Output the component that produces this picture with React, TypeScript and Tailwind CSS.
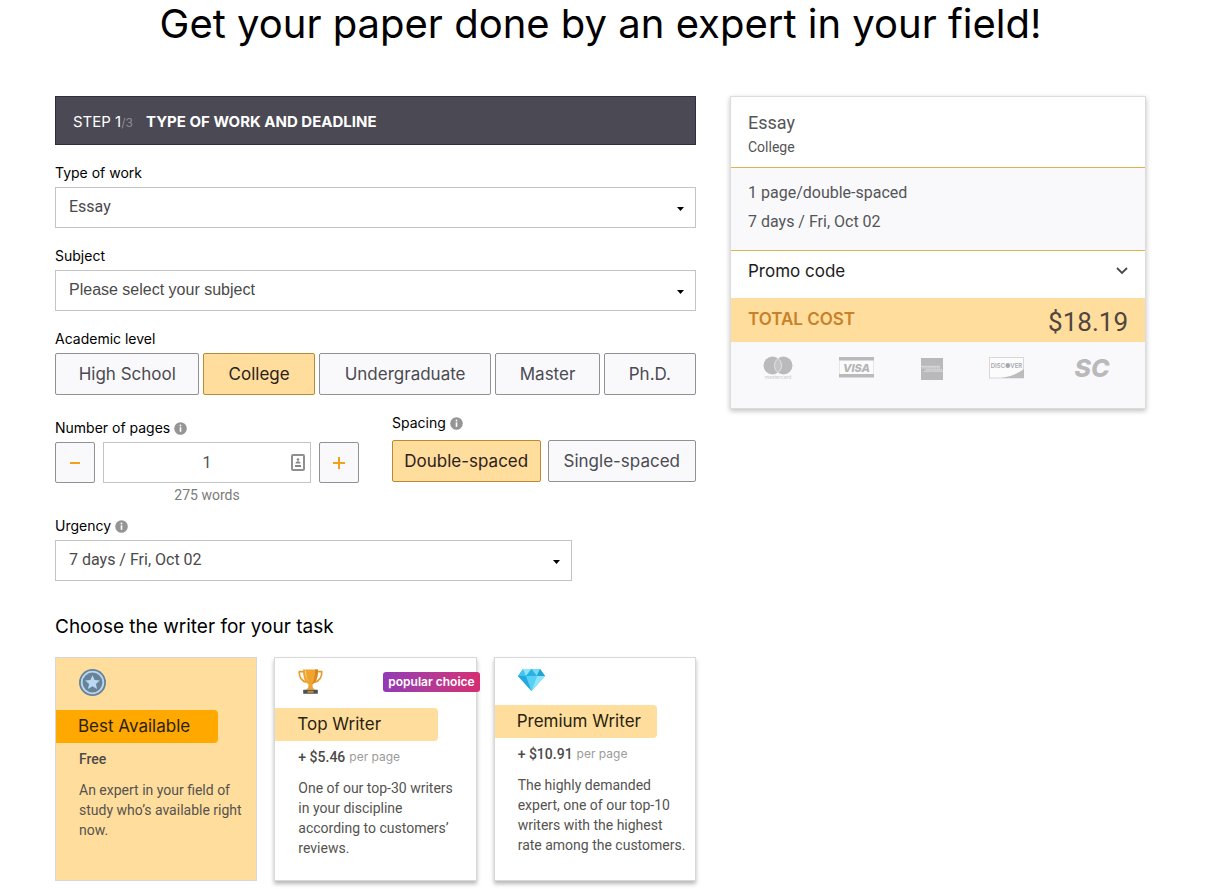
import { useState } from 'react';

const WORDS_PER_PAGE = 275;

const levels = ['High School', 'College', 'Undergraduate', 'Master', 'Ph.D.'];
const spacings = ['Double-spaced', 'Single-spaced'];

const writers = [
  {
    key: 'best',
    name: 'Best Available',
    price: 'Free',
    suffix: '',
    description: 'An expert in your field of study who’s available right now.',
    icon: <MedalIcon />,
    popular: false
  },
  {
    key: 'top',
    name: 'Top Writer',
    price: '+ $5.46',
    suffix: 'per page',
    description: 'One of our top-30 writers in your discipline according to customers’ reviews.',
    icon: <TrophyIcon />,
    popular: true
  },
  {
    key: 'premium',
    name: 'Premium Writer',
    price: '+ $10.91',
    suffix: 'per page',
    description: 'The highly demanded expert, one of our top-10 writers with the highest rate among the customers.',
    icon: <DiamondIcon />,
    popular: false
  }
];

function MedalIcon() {
  return (
    <svg width="27" height="27" viewBox="0 0 27 27" aria-hidden="true">
      <circle cx="13.5" cy="13.5" r="13.5" fill="#66839a" />
      <circle cx="13.5" cy="13.5" r="10.8" fill="none" stroke="#b9d5ee" strokeWidth="1.8" />
      <path d="M13.5 6.2l2.1 4.8 5.2.5-3.9 3.4 1.2 5.1-4.6-2.7-4.6 2.7 1.2-5.1-3.9-3.4 5.2-.5z" fill="#bcd9f3" />
    </svg>
  );
}

function TrophyIcon() {
  return (
    <svg width="25" height="25" viewBox="0 0 25 25" aria-hidden="true">
      <path d="M6 2.6H1.3C1 7.600 3.400 11.800 8.300 13.300M19 2.600h4.700C24 7.600 21.600 11.800 16.700 13.300" fill="none" stroke="#e89a2c" strokeWidth="1.6" />
      <path d="M5 .4h15c0 7.600-1.500 12.300-5.400 14.600v2.600c.2 1.600 1 2.200 2.600 3.200H7.800c1.600-1 2.400-1.600 2.600-3.200V15C6.500 12.700 5 8 5 .4z" fill="#f0a32f" />
      <path d="M8 1.500c.2 5.500 1.100 9.100 3.100 11.400C8.500 10.800 7 7.200 6.900 1.500z" fill="#ffcf74" />
      <path d="M17 .4h3c0 7.600-1.500 12.300-5.400 14.600l-1 .3C16 12.500 17.300 8 17 .4z" fill="#d8861d" />
      <rect x="5.200" y="20.800" width="14.600" height="4" rx=".5" fill="#4b5158" />
      <rect x="9.500" y="21.800" width="6" height="2" fill="#c98a34" />
    </svg>
  );
}

function DiamondIcon() {
  return (
    <svg width="27" height="22" viewBox="0 0 27 22" aria-hidden="true">
      <path d="M5 0h17l5 7-13.500 15L0 7z" fill="#35bdea" />
      <path d="M0 7h8l5.500 15z" fill="#23a9dd" />
      <path d="M8 7h11l-5.500 15z" fill="#56d0f5" />
      <path d="M19 7h8L13.500 22z" fill="#8fe3fb" />
      <path d="M5 0l3 7H0z" fill="#45c5ee" />
      <path d="M5 0h8.500L8 7z" fill="#8fe6fc" />
      <path d="M13.500 0L19 7H8z" fill="#29b3e4" />
      <path d="M13.500 0H22l-3 7z" fill="#74dbf8" />
      <path d="M22 0l5 7h-8z" fill="#1fa3d8" />
    </svg>
  );
}

function InfoIcon() {
  return (
    <svg width="13" height="13" viewBox="0 0 13 13" aria-hidden="true">
      <circle cx="6.500" cy="6.500" r="6.300" fill="#959595" />
      <path d="M6.500 5.300v4.500" fill="none" stroke="#fff" strokeWidth="1.600" />
      <circle cx="6.500" cy="3.500" r=".9" fill="#fff" />
    </svg>
  );
}

function Caret() {
  return (
    <svg className="pointer-events-none absolute top-5 right-3" width="7" height="4" viewBox="0 0 7 4" aria-hidden="true">
      <path d="M0 0h7L3.500 4z" fill="#000" />
    </svg>
  );
}

function PaymentIcons() {
  return (
    <div className="flex h-[66px] items-start justify-between pt-3 pr-[31px] pl-8 font-[Inter,sans-serif]">
      <svg width="30" height="27" viewBox="0 0 30 27" role="img" aria-label="Mastercard">
        <circle cx="9.500" cy="11.500" r="9" fill="#bababc" />
        <circle cx="20.500" cy="11.500" r="9" fill="#bababc" />
        <path d="M15 4.400a9 9 0 0 1 0 14.200 9 9 0 0 1 0-14.200z" fill="#c4c4c6" stroke="#ececee" strokeWidth=".8" />
        <text x="15" y="25" textAnchor="middle" fontSize="5" fill="#c9c9cb">mastercard</text>
      </svg>
      <svg width="35" height="27" viewBox="0 0 35 27" role="img" aria-label="Visa">
        <rect x=".5" y="3.500" width="34" height="19" fill="#fbfbfc" stroke="#e6e6e8" />
        <path d="M0 3h35v3.500H0zM0 20h35v3.500H0z" fill="#bababc" />
        <text x="17.500" y="17.500" textAnchor="middle" fontSize="11" fontWeight="800" fontStyle="italic" fill="#b4b4b6">VISA</text>
      </svg>
      <svg width="24" height="27" viewBox="0 0 24 27" role="img" aria-label="American Express">
        <rect x="1" y="4" width="22" height="22" fill="#b9b9bc" />
        <path d="M1 12.300h19M4 17.200h19" stroke="#e4e4e6" strokeWidth=".8" />
        <path d="M2 13.900h18M6 15.700h16" stroke="#dcdcde" strokeWidth="1.200" strokeDasharray="1.500 .6" />
      </svg>
      <svg width="35" height="27" viewBox="0 0 35 27" role="img" aria-label="Discover">
        <rect x=".5" y="3.500" width="34" height="20.500" fill="#fcfcfd" stroke="#d8d8da" />
        <path d="M12 24c10-1.500 17-4.500 23-9v9z" fill="#bcbcbe" />
        <text x="17.500" y="14" textAnchor="middle" fontSize="6" fontWeight="600" fill="#a9a9ab">DISC●VER</text>
      </svg>
      <svg width="44" height="30" viewBox="0 0 44 30" role="img" aria-label="SC">
        <text x="22" y="23" textAnchor="middle" fontSize="25" fontWeight="800" fontStyle="italic" fill="#b9b9bb">SC</text>
      </svg>
    </div>
  );
}

const labelClass = 'block text-sm leading-5 text-black';
const selectClass =
  'block h-[41px] w-full appearance-none rounded-none border border-[#c4c4c6] bg-white pb-[2px] pl-[13px] text-base text-[#4a4a4a]';

const optionClass = (active: boolean) =>
  `h-[42px] rounded-[2px] border pt-[2px] text-[17px] whitespace-nowrap ${
    active ? 'border-[#b98a35] bg-[#ffdd9c] text-[#2b211b]' : 'border-[#919195] bg-[#f9f9fc] text-[#4b4a52]'
  }`;

const stepperClass =
  'flex h-[41px] w-10 shrink-0 items-center justify-center rounded-[2px] border border-[#919195] bg-[#f9f9fc]';

export default function OrderForm() {
  const [workType, setWorkType] = useState<string>('Essay');
  const [subject, setSubject] = useState<string>('');
  const [level, setLevel] = useState<string>('College');
  const [pages, setPages] = useState<number>(1);
  const [spacing, setSpacing] = useState<string>('Double-spaced');
  const [urgency, setUrgency] = useState<string>('7 days / Fri, Oct 02');
  const [writer, setWriter] = useState<string>('best');

  return (
    <div className="bg-white pr-[65px] pl-[55px] font-[Inter,sans-serif]">
      <h1 className="text-center text-[40px] leading-[48px] text-black">
        Get your paper done by an expert in your field!
      </h1>

      <div className="mt-12 grid grid-cols-[minmax(0,641fr)_minmax(0,416fr)] items-start gap-[34px]">
        <main>
          <h2 className="flex h-[49px] items-center border border-[#2f2e3a] bg-[#4b4954] px-[17px] pt-1 text-[15px] text-white">
            <span className="font-normal">
              STEP 1<span className="text-xs text-[#8d8c94]">/3</span>
            </span>
            <span className="ml-[13px] font-bold">TYPE OF WORK AND DEADLINE</span>
          </h2>

          <div className="mt-[18px]">
            <label htmlFor="work-type" className={labelClass}>Type of work</label>
            <div className="relative mt-1">
              <select
                id="work-type"
                value={workType}
                onChange={(e) => setWorkType(e.target.value)}
                className={`${selectClass} font-[Roboto,sans-serif]`}
              >
                <option>Essay</option>
                <option>Research paper</option>
              </select>
              <Caret />
            </div>
          </div>

          <div className="mt-[18px]">
            <label htmlFor="subject" className={labelClass}>Subject</label>
            <div className="relative mt-1">
              <select
                id="subject"
                value={subject}
                onChange={(e) => setSubject(e.target.value)}
                className={`${selectClass} font-['Liberation_Sans',sans-serif]`}
              >
                <option value="">Please select your subject</option>
                <option>History</option>
              </select>
              <Caret />
            </div>
          </div>

          <div className="mt-[18px]" role="group" aria-labelledby="level-label">
            <span id="level-label" className={labelClass}>Academic level</span>
            <div className="mt-1 grid grid-cols-[144fr_111fr_172fr_104fr_92fr] gap-1">
              {levels.map((item) => (
                <button key={item} type="button" aria-pressed={level === item} onClick={() => setLevel(item)} className={optionClass(level === item)}>
                  {item}
                </button>
              ))}
            </div>
          </div>

          <div className="mt-[18px] grid grid-cols-2 items-start gap-[33px]">
            <div className="pt-[5px]">
              <label htmlFor="pages" className="flex items-center gap-1 text-sm leading-5 text-black">
                Number of pages <InfoIcon />
              </label>
              <div className="mt-1 flex gap-2">
                <button type="button" aria-label="Remove page" onClick={() => setPages(Math.max(1, pages - 1))} className={stepperClass}>
                  <svg width="12" height="12" viewBox="0 0 12 12" aria-hidden="true">
                    <path d="M1 6h10" stroke="#f0a21c" strokeWidth="2" />
                  </svg>
                </button>
                <div className="relative min-w-0 flex-1">
                  <input
                    id="pages"
                    type="text"
                    inputMode="numeric"
                    value={pages}
                    onChange={(e) => setPages(Number(e.target.value) || 1)}
                    className="block h-[41px] w-full border border-[#c4c4c6] bg-white text-center font-[Roboto,sans-serif] text-base text-[#515151]"
                  />
                  <svg className="pointer-events-none absolute top-3 right-[6px]" width="14" height="17" viewBox="0 0 14 17" aria-hidden="true">
                    <rect x="1" y="1" width="12" height="15" rx="1" fill="#fff" stroke="#8f8f8f" strokeWidth="2" />
                    <circle cx="7" cy="5.500" r="1.300" fill="#858585" />
                    <path d="M4.500 9.500c0-3 5-3 5 0zM4 11h6v2H4z" fill="#858585" />
                  </svg>
                </div>
                <button type="button" aria-label="Add page" onClick={() => setPages(pages + 1)} className={stepperClass}>
                  <svg width="12" height="12" viewBox="0 0 12 12" aria-hidden="true">
                    <path d="M0 6h12M6 0v12" stroke="#f0a21c" strokeWidth="2" />
                  </svg>
                </button>
              </div>
              <p className="mt-[2px] text-center font-[Roboto,sans-serif] text-sm leading-5 text-[#7b7b7b]">
                {pages * WORDS_PER_PAGE} words
              </p>
            </div>

            <div role="group" aria-labelledby="spacing-label">
              <span id="spacing-label" className="flex items-center gap-1 text-sm leading-5 text-black">
                Spacing <InfoIcon />
              </span>
              <div className="mt-[7px] grid grid-cols-2 gap-[7px]">
                {spacings.map((item) => (
                  <button key={item} type="button" aria-pressed={spacing === item} onClick={() => setSpacing(item)} className={optionClass(spacing === item)}>
                    {item}
                  </button>
                ))}
              </div>
            </div>
          </div>

          <div className="mt-[11px] max-w-[517px]">
            <label htmlFor="urgency" className="flex items-center gap-1 text-sm leading-5 text-black">
              Urgency <InfoIcon />
            </label>
            <div className="relative mt-1">
              <select
                id="urgency"
                value={urgency}
                onChange={(e) => setUrgency(e.target.value)}
                className={`${selectClass} font-[Roboto,sans-serif]`}
              >
                <option>7 days / Fri, Oct 02</option>
                <option>14 days / Fri, Oct 09</option>
              </select>
              <Caret />
            </div>
          </div>

          <h3 className="mt-8 text-[19px] leading-7 text-black">Choose the writer for your task</h3>

          <div className="mt-4 grid grid-cols-3 gap-[17px] pb-2">
            {writers.map((item) => {
              const active = writer === item.key;
              return (
                <button
                  key={item.key}
                  type="button"
                  aria-pressed={active}
                  onClick={() => setWriter(item.key)}
                  className={`relative flex flex-col items-start border border-[#d8d8d8] pt-[11px] pb-[22px] text-left ${
                    active ? 'bg-[#ffdd9c]' : 'bg-white shadow-[0_3px_4px_rgba(0,0,0,0.28)]'
                  }`}
                >
                  <span className="ml-[23px]">{item.icon}</span>
                  {item.popular && (
                    <span className="absolute top-[14px] right-[-4px] rounded-[3px] bg-linear-to-r from-[#9338b5] to-[#d62c72] px-[5px] text-xs leading-5 font-semibold text-white">
                      popular choice
                    </span>
                  )}
                  <span className={`mt-[14px] h-[33px] w-[81%] rounded-r-[4px] pl-[22px] text-[17px] leading-8 whitespace-nowrap text-[#2b1f10] ${active ? 'bg-[#ffa900]' : 'bg-[#ffdd9c]'}`}>
                    {item.name}
                  </span>
                  <span className="mt-[6px] flex items-center gap-1 pl-[23px] leading-5">
                    <span className="font-[Roboto,sans-serif] text-sm leading-5 font-medium text-[#4c4a48]">{item.price}</span>
                    <span className="text-xs leading-5 text-[#9b9b9b]">{item.suffix}</span>
                  </span>
                  <span className="mt-[11px] pr-[9px] pl-[23px] font-[Roboto,sans-serif] text-sm leading-5 text-[#555350]">
                    {item.description}
                  </span>
                </button>
              );
            })}
          </div>
        </main>

        <aside className="border border-[#dcdcdc] bg-white font-[Roboto,sans-serif] text-[#555557] shadow-[0_2px_5px_rgba(0,0,0,0.25)]">
          <div className="px-[17px] pt-[14px] pb-[9px]">
            <p className="text-lg leading-6">{workType}</p>
            <p className="pt-px text-sm leading-[22px]">{level}</p>
          </div>
          <div className="border-y border-[#dcb34c] bg-[#f9f9fc] px-[17px] pt-[10px] pb-[14px] text-base leading-[29px]">
            <p>{pages} page/{spacing.toLowerCase()}</p>
            <p>{urgency}</p>
          </div>
          <button type="button" className="flex h-[47px] w-full items-center justify-between px-[17px] pb-[5px] font-[Inter,sans-serif] text-[17px] text-[#1c1c1c]">
            Promo code
            <svg width="12" height="10" viewBox="0 0 12 10" aria-hidden="true">
              <path d="M1 1l5 5 5-5" fill="none" stroke="#4a4a4a" strokeWidth="1.800" />
            </svg>
          </button>
          <div className="flex h-11 items-center justify-between bg-[#ffdd9c] px-[17px]">
            <span className="font-[Inter,sans-serif] text-[17px] font-semibold text-[#c7812a]">TOTAL COST</span>
            <span className="pt-1 text-[26px] text-[#514540]">${(18.19 * pages).toFixed(2)}</span>
          </div>
          <div className="bg-[#f9f9fc]">
            <PaymentIcons />
          </div>
        </aside>
      </div>
    </div>
  );
}
